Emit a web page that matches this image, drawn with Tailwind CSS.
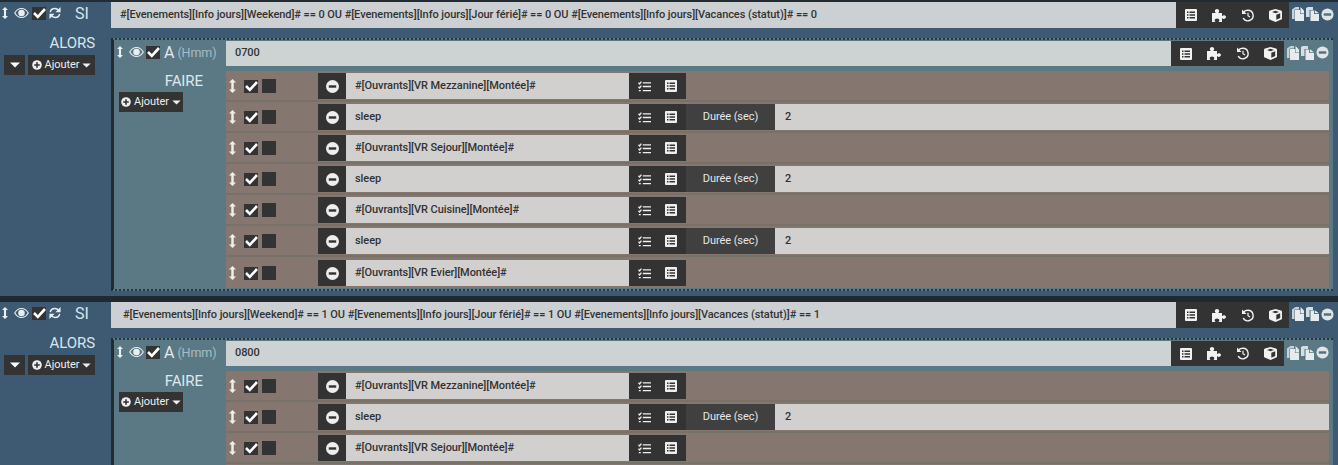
<!DOCTYPE html>
<html lang="fr">
<head>
    <meta charset="UTF-8">
    <title>Scénario</title>
    <script src="https://cdn.jsdelivr.net/npm/@tailwindcss/browser@4"></script>
</head>
<body class="h-[465px] overflow-hidden bg-[#3d5a72] font-['Roboto',sans-serif] text-[11px] tracking-[-0.07px]">
    <svg class="hidden" xmlns="http://www.w3.org/2000/svg">
        <symbol id="i-arrows" viewBox="0 0 8 16"><path fill="currentColor" d="M4 0 8 4H5.4v8H8l-4 4-4-4h2.6V4H0z"/></symbol>
        <symbol id="i-eye" viewBox="0 0 16 12"><path fill="none" stroke="currentColor" stroke-width="1.2" d="M.8 6C2.600 2.800 5 1.200 8 1.200s5.400 1.600 7.200 4.800c-1.800 3.200-4.200 4.800-7.200 4.800S2.600 9.200.8 6z"/><circle cx="8" cy="6" r="3.500" fill="currentColor"/></symbol>
        <symbol id="i-check" viewBox="0 0 14 14"><rect y="1" width="14" height="13" fill="#333"/><path fill="none" stroke="#fff" stroke-width="2.600" d="M2 7 5.800 10.800 13 3"/></symbol>
        <symbol id="i-refresh" viewBox="0 0 14 14"><path fill="none" stroke="currentColor" stroke-width="1.700" d="M1.500 6C2 3.500 4 1.800 6.800 1.800c2 0 3.500.9 4.700 2.400M12.500 8c-.5 2.500-2.500 4.200-5.300 4.200-2 0-3.500-.9-4.700-2.400"/><path fill="currentColor" d="M13.500 0v6h-6zM.5 14V8h6z"/></symbol>
        <symbol id="i-minus" viewBox="0 0 14 14"><circle cx="7" cy="7" r="7" fill="currentColor"/><rect x="3" y="5.700" width="8" height="2.600" fill="#333"/></symbol>
        <symbol id="i-minus-l" viewBox="0 0 14 14"><circle cx="7" cy="7" r="6.500" fill="currentColor"/><rect x="3" y="5.700" width="8" height="2.600" fill="#4f6f80"/></symbol>
        <symbol id="i-plus" viewBox="0 0 10 10"><circle cx="5" cy="5" r="4.800" fill="currentColor"/><path fill="#333" d="M4.200 2.200h1.600v2h2v1.600h-2v2H4.200v-2h-2V4.200h2z"/></symbol>
        <symbol id="i-caret" viewBox="0 0 10 6"><path fill="currentColor" d="M0 .5h10L5 5.500z"/></symbol>
        <symbol id="i-list" viewBox="0 0 12 12"><path fill="currentColor" fill-rule="evenodd" d="M1 0h10a1 1 0 0 1 1 1v10a1 1 0 0 1-1 1H1a1 1 0 0 1-1-1V1a1 1 0 0 1 1-1zM2 2.500V4h1.500V2.500zM4.500 2.500V4H10V2.500zM2 5.200v1.500h1.500V5.200zM4.500 5.200v1.500H10V5.200zM2 8v1.500h1.500V8zM4.500 8v1.500H10V8z"/></symbol>
        <symbol id="i-tasks" viewBox="0 0 13 11"><path fill="none" stroke="currentColor" stroke-width="1.300" d="M.5 1.800 1.600 3 3.400.6M.5 5.800 1.600 7 3.400 4.600M.8 9.700h2M4.800 1.800H13M4.800 5.500H13M4.800 9.700H13"/></symbol>
        <symbol id="i-puzzle" viewBox="0 0 14 13"><path fill="currentColor" d="M0 4h3.800c-.6-.8-1-1.300-1-2C2.800.8 3.900 0 5 0s2.200.8 2.200 2c0 .7-.4 1.200-1 2H10v3.200c.8-.5 1.200-.9 1.900-.9.900 0 2.100.6 2.100 1.800 0 1.100-1.200 1.800-2.100 1.800-.7 0-1.100-.4-1.900-.9V13H6.500c.5-.8.800-1 .8-1.800 0-.9-1-1.700-2.300-1.700s-2.300.8-2.300 1.700c0 .8.300 1 .8 1.800H0z"/></symbol>
        <symbol id="i-history" viewBox="0 0 13 13"><path fill="none" stroke="currentColor" stroke-width="1.500" d="M2 2.500C3 1.400 4.800.8 6.300.8a5.700 5.700 0 1 1-5 8.400"/><path fill="currentColor" d="M0 0v5h5z"/><path fill="none" stroke="currentColor" stroke-width="1.300" d="M6.500 3.500v3.200l2.200 1.500"/></symbol>
        <symbol id="i-cube" viewBox="0 0 13 13"><path fill="currentColor" fill-rule="evenodd" d="M6.500 0 12 1.600q1 .3 1 1.400v6.400q0 .8-.8 1.200L6.500 13 .8 10.600q-.8-.4-.8-1.200V3q0-1.100 1-1.400zM3 3l3.500 1.300L10 3 6.500 1.800zM7.300 5.700v5l3.900-1.700V4.300z"/></symbol>
        <symbol id="i-copy" viewBox="0 0 12 14"><path fill="#c7d3d9" d="M0 2.500 3.500 0H7v12H0z"/><path fill="#4f6f80" d="M2.500 2.500h6v11h-6z"/><path fill="#e6ebee" d="M3 3h5v4h4v7H3z"/><path fill="#e6ebee" d="M8.500 0 12 3.500v3H8.500z"/></symbol>
        <symbol id="i-files" viewBox="0 0 13 14"><path fill="#d5dee2" d="M0 1 2 0h5v3.500h-3V10H0z"/><path fill="#4f6f80" d="M3.500 3h5v11h-5z"/><path fill="#e6ebee" d="M4.500 3.500h3.500V7h5v7H4.500z"/><path fill="#e6ebee" d="M8.800 3.200 13 6.200H8.800z"/></symbol>
    </svg>

    <div id="page"></div>

    <script>
        // petit helper pour les icones
        const ico = (id, w, h) => `<svg width="${w}" height="${h}" class="shrink-0"><use href="#${id}"/></svg>`;

        const toolbar = `
            <div class="w-[113px] h-full bg-[#333333] flex items-center text-[#f2f2f0] shrink-0 pl-[9px]">
                ${ico('i-list', 12, 12)}
                <span class="ml-[15px]">${ico('i-puzzle', 14, 13)}</span>
                <span class="ml-[16px]">${ico('i-history', 12, 13)}</span>
                <span class="ml-[15px]">${ico('i-cube', 13, 13)}</span>
            </div>`;

        const copyIcons = `
            <div class="flex items-center ml-[3px] gap-[2px] pb-[2px]">
                ${ico('i-copy', 12, 14)}
                ${ico('i-files', 13, 14)}
                <span class="text-[#dfe5e6]">${ico('i-minus-l', 13, 13)}</span>
            </div>`;

        function actionRow(label, isSleep, rowCls) {
            return `
            <div class="${rowCls} flex items-center">
                <div class="w-[10px] flex justify-end text-[#efefe6]">${ico('i-arrows', 7, 14)}</div>
                <div class="ml-[8px] flex items-center">${ico('i-check', 14, 14)}</div>
                <div class="ml-[4px] w-[14px] h-[14px] bg-[#333333]"></div>
                <div class="ml-[42px] w-[28px] h-[26px] bg-[#333333] flex items-center justify-center text-[#eeeeee]">${ico('i-minus', 13, 13)}</div>
                <div class="w-[283px] h-[26px] bg-[#d2d0ce] text-[#333] font-medium flex items-center pl-[9px] pt-[1px]">${label}</div>
                <div class="w-[57px] h-[26px] bg-[#333333] text-[#eeeeee] flex items-center pl-[9px] gap-[14px]">
                    ${ico('i-tasks', 13, 11)}
                    ${ico('i-list', 12, 12)}
                </div>
                ${isSleep ? `<div class="flex-1 h-[26px] flex">
                    <div class="w-[89px] h-full bg-[#404040] text-[#e6e6e6] flex items-center justify-center pt-[1px]">Durée (sec)</div>
                    <div class="flex-1 h-full bg-[#d2d0ce] text-[#333] font-medium flex items-center pl-[10px] pt-[1px]">2</div>
                </div>` : ''}
            </div>`;
        }

        function addBtn(extra) {
            return `<div class="h-[20px] bg-[#333333] text-[#eeeeee] flex items-center justify-center gap-[2px] ${extra}">
                ${ico('i-plus', 10, 10)}<span class="ml-[1px]">Ajouter</span><span class="ml-[1px]">${ico('i-caret', 9, 5)}</span>
            </div>`;
        }

        function block(cond, condPad, hour, rows) {
            return `
            <section>
                <div class="h-[26px] flex">
                    <div class="w-[111px] flex items-center text-[#e9eef0] shrink-0 pb-[4px]">
                        <span class="ml-[2px]">${ico('i-arrows', 6, 14)}</span>
                        <span class="ml-[6px]">${ico('i-eye', 15, 12)}</span>
                        <span class="ml-[3px]">${ico('i-check', 14, 14)}</span>
                        <span class="ml-[3px]">${ico('i-refresh', 12, 12)}</span>
                        <span class="ml-[14px] text-[16px] text-[#dbe4ea] translate-y-[1px]">SI</span>
                    </div>
                    <div class="w-[1065px] bg-[#ccd0d2] text-[#333] font-medium flex items-center ${condPad}">${cond}</div>
                    ${toolbar}
                    ${copyIcons}
                </div>
                <div class="flex mt-[10px]">
                    <div class="w-[111px] shrink-0 pr-[16px]">
                        <div class="text-right text-[15px] text-[#dbe4ea] leading-[19px] -mt-[4px]">ALORS</div>
                        <div class="flex justify-end gap-[3px] mt-[2px]">
                            <div class="w-[21px] h-[20px] bg-[#333333] text-white flex items-center justify-center">${ico('i-caret', 10, 6)}</div>
                            ${addBtn('w-[67px]')}
                        </div>
                    </div>
                    <div class="w-[1222px] bg-[#5a7984] border-l-[3px] [border-left-style:solid] border-l-[#222b31] border-t-2 border-t-[#263640] border-b-2 border-b-[#263640] border-r-0 border-dotted pt-[1px] pb-[1px] pr-[4px]">
                        <div class="h-[25px] flex">
                            <div class="w-[112px] flex items-center text-[#e9eef0] shrink-0 pb-[3px]">
                                <span class="ml-[3px]">${ico('i-arrows', 6, 14)}</span>
                                <span class="ml-[6px]">${ico('i-eye', 15, 12)}</span>
                                <span class="ml-[2px]">${ico('i-check', 14, 14)}</span>
                                <span class="ml-[4px] text-[16px] text-[#e3eaec] translate-y-[1px]">A</span>
                                <span class="ml-[3px] text-[12.5px] text-[#a9bcc3] translate-y-[1px]">(Hmm)</span>
                            </div>
                            <div class="w-[946px] bg-[#cdd2d2] text-[#333] font-medium flex items-center pl-[9px]">${hour}</div>
                            ${toolbar}
                            ${copyIcons}
                        </div>
                        <div class="flex mt-[5px]">
                            <div class="w-[112px] shrink-0 pl-[5px]">
                                <div class="pr-[23px] text-right text-[15px] text-[#dfe8ea] leading-[19px] mt-[1px]">FAIRE</div>
                                <div class="mt-[1px]">${addBtn('w-[64px]')}</div>
                            </div>
                            <div class="flex-1 bg-[#85776f]">${rows.join('')}</div>
                        </div>
                    </div>
                </div>
            </section>`;
        }

        const VR = (n) => `#[Ouvrants][VR ${n}][Montée]#`;
        const sep = 'h-[31px] pt-[1px] border-b-2 border-[#767268]';
        const last = 'h-[31px] pt-[3px] border-b-2 border-[#85776f]';
        const rows1 = [
            actionRow(VR('Mezzanine'), false, sep),
            actionRow('sleep', true, sep),
            actionRow(VR('Sejour'), false, sep),
            actionRow('sleep', true, sep),
            actionRow(VR('Cuisine'), false, sep),
            actionRow('sleep', true, sep),
            actionRow(VR('Evier'), false, last)
        ];
        // le bloc du bas est coupé par le bord de la fenêtre
        const rows2 = [
            actionRow(VR('Mezzanine'), false, sep),
            actionRow('sleep', true, sep),
            actionRow(VR('Sejour'), false, sep),
            `<div class="h-[4px]"></div>`
        ];

        document.getElementById('page').innerHTML =
            `<div class="h-[2px] bg-[#222b31]"></div>` +
            block('#[Evenements][Info jours][Weekend]# == 0 OU #[Evenements][Info jours][Jour férié]# == 0 OU #[Evenements][Info jours][Vacances (statut)]# == 0', 'pl-[9px]', '0700', rows1) +
            `<div class="h-[6px] bg-[#20292f] mt-[5px]"></div>` +
            `<div class="h-[163px] overflow-hidden">` +
            block('#[Evenements][Info jours][Weekend]# == 1 OU #[Evenements][Info jours][Jour férié]# == 1 OU #[Evenements][Info jours][Vacances (statut)]# == 1', 'pl-[12px] pt-[1px]', '0800', rows2) +
            `</div>`;
    </script>
</body>
</html>
